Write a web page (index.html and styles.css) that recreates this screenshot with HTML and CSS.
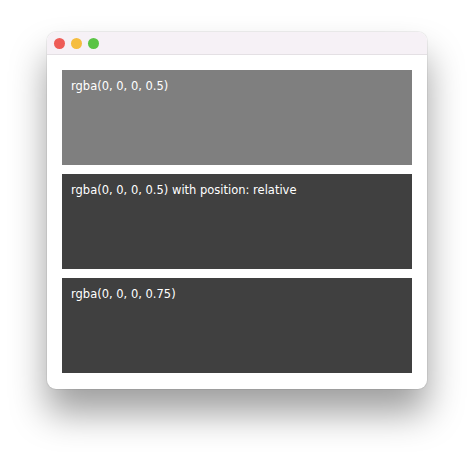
FILE: index.html
```html
<!DOCTYPE html>
<html lang="en">
<head>
  <meta charset="UTF-8">
  <title>rgba</title>
  <link rel="stylesheet" href="styles.css">
</head>
<body>
  <div class="window">
    <div class="titlebar">
      <span class="dot red"></span>
      <span class="dot yellow"></span>
      <span class="dot green"></span>
    </div>
    <div class="content">
      <div class="box half">rgba(0, 0, 0, 0.5)</div>
      <div class="box half relative">rgba(0, 0, 0, 0.5) with position: relative</div>
      <div class="box threequarter">rgba(0, 0, 0, 0.75)</div>
    </div>
  </div>
</body>
</html>
```

FILE: styles.css
```css
html, body {
  margin: 0;
  padding: 0;
}

body {
  background: #fff;
  min-height: 100vh;
  box-sizing: border-box;
  padding: 32px 0 0 47px;
  font-family: "DejaVu Sans", Verdana, sans-serif;
}

.window {
  width: 380px;
  background: #fff;
  border-radius: 9px;
  overflow: hidden;
  box-shadow: 0 24px 36px rgba(0,0,0,.38), 0 0 0 1px rgba(0,0,0,.06);
}

.titlebar {
  height: 22px;
  background: #f6f1f6;
  border-bottom: 1px solid #e4e0e4;
  display: flex;
  align-items: center;
  gap: 6px;
  padding-left: 7px;
}
.dot {
  width: 11px;
  height: 11px;
  border-radius: 50%;
}
.red { background: #ee5c57; }
.yellow { background: #f5bd3f; }
.green { background: #5ac445; }

.content {
  padding: 15px 15px 16px;
  display: flex;
  flex-direction: column;
  gap: 9px;
}

.box {
  height: 95px;
  box-sizing: border-box;
  padding: 8px 9px;
  color: #fff;
  font-size: 11.5px;
  line-height: 16px;
}
.half {
  background: rgba(0,0,0,.5);
}
.half.relative {
  position: relative;
  background: #404040;
}
.threequarter {
  background: rgba(0,0,0,.75);
}
```
